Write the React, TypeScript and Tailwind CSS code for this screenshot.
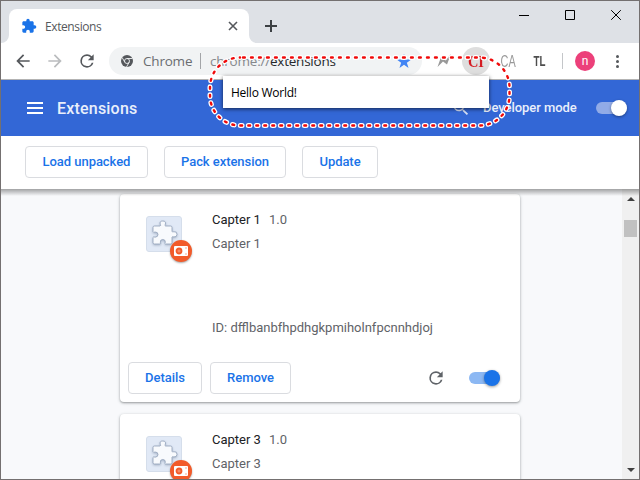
import React from 'react';

const UI = "font-['Open_Sans','Noto_Sans',sans-serif]";

function PuzzleIcon({ className }: { className: string }) {
  return (
    <svg viewBox="0 0 24 24" className={className}>
      <path d="M20.5 11H19V7c0-1.1-.9-2-2-2h-4V3.5a2.5 2.5 0 0 0-5 0V5H4c-1.1 0-1.99.9-1.99 2v3.8H3.5c1.49 0 2.7 1.21 2.7 2.7s-1.21 2.7-2.7 2.7H2V20c0 1.1.9 2 2 2h3.8v-1.5c0-1.49 1.21-2.7 2.7-2.7s2.7 1.21 2.7 2.7V22H17c1.1 0 2-.9 2-2v-4h1.5a2.5 2.5 0 0 0 0-5z" />
    </svg>
  );
}

function ReloadIcon({ className }: { className: string }) {
  return (
    <svg viewBox="0 0 24 24" className={className}>
      <path d="M17.65 6.35A7.96 7.96 0 0 0 12 4a8 8 0 1 0 7.73 10h-2.08A6 6 0 1 1 12 6c1.66 0 3.14.69 4.22 1.78L13 11h7V4z" />
    </svg>
  );
}

function BackIcon({ className }: { className: string }) {
  return (
    <svg viewBox="0 0 24 24" className={className}>
      <path d="M20 11H7.83l5.59-5.59L12 4l-8 8 8 8 1.41-1.41L7.83 13H20z" />
    </svg>
  );
}

function TabStrip() {
  return (
    <div className="flex h-[42px] bg-[#dee1e6] pl-2">
      <div className="relative mt-2 flex h-[34px] w-[240px] items-center rounded-t-lg bg-white pl-3 pr-[11px]">
        <svg viewBox="0 0 8 8" className="absolute -left-2 bottom-0 size-2 fill-white">
          <path d="M8 0v8H0a8 8 0 0 0 8-8" />
        </svg>
        <svg viewBox="0 0 8 8" className="absolute -right-2 bottom-0 size-2 fill-white">
          <path d="M0 0v8h8a8 8 0 0 1-8-8" />
        </svg>
        <PuzzleIcon className="size-4 fill-[#1a73e8]" />
        <span className="ml-2 mt-px grow text-[12px] tracking-[-0.4px] text-[#55585c]">Extensions</span>
        <svg viewBox="0 0 10 10" className="size-[10px] fill-none stroke-[#55585c] stroke-[1.6]">
          <path d="M1 1l8 8M9 1L1 9" />
        </svg>
      </div>
      <svg viewBox="0 0 12 12" className="ml-4 mt-[19px] size-3 fill-none stroke-[#3c4043] stroke-2">
        <path d="M6 0v12M0 6h12" />
      </svg>
      <div className="ml-auto mt-[9px] flex gap-9 pr-[18px]">
        <svg viewBox="0 0 10 10" className="size-[10px] fill-none stroke-black">
          <path d="M0 5.5h10" />
        </svg>
        <svg viewBox="0 0 10 10" className="size-[10px] fill-none stroke-black">
          <path d="M.5 .5h9v9h-9z" />
        </svg>
        <svg viewBox="0 0 10 10" className="size-[10px] fill-none stroke-black">
          <path d="M.2 .2l9.6 9.6M9.8 .2L.2 9.8" />
        </svg>
      </div>
    </div>
  );
}

function Toolbar() {
  return (
    <div className="flex h-[37px] shrink-0 items-center border-b border-[#b3b3b3] bg-white pl-[12px]">
      <BackIcon className="size-5 fill-[#55585c]" />
      <BackIcon className="ml-3 size-5 rotate-180 fill-[#babcbe]" />
      <ReloadIcon className="ml-3 size-5 fill-[#55585c]" />
      <div className="ml-3 flex h-7 w-[313px] items-center rounded-full bg-[#f1f3f4] pl-3 pr-[10px]">
        <svg viewBox="0 0 24 24" className="size-3 fill-none stroke-[#f1f3f4]">
          <circle cx="12" cy="12" r="12" className="fill-[#55585c] stroke-none" />
          <circle cx="12" cy="12" r="5" strokeWidth="1.8" />
          <path d="M12 7h11M7.7 14.5L2.2 5M16.3 14.5L11 24" strokeWidth="1.8" />
        </svg>
        <span className={`ml-[10px] w-[50px] whitespace-nowrap text-[13.5px] tracking-[-0.2px] text-[#6a6d71] ${UI}`}>Chrome</span>
        <span className="ml-[7px] h-4 w-px bg-[#a3a5a8]" />
        <span className={`ml-[9px] grow whitespace-nowrap text-[13.5px] tracking-[-0.22px] text-[#85888c] ${UI}`}>
          chrome://<span className="text-[#26282b]">extensions</span>
        </span>
        <svg viewBox="0 0 24 24" className="size-4 fill-[#4285f4]">
          <path d="M12 17.8L18.8 22.5 16.3 14.5 23 9.6h-8.2L12 1.5 9.2 9.6H1l6.7 4.9-2.5 8z" />
        </svg>
      </div>
      <svg viewBox="0 0 16 16" className="ml-[14px] size-4 fill-[#999]">
        <path d="M1.500 14L5 4l4.500 3.500L15 1l-4 10.500L7 8.500z" />
      </svg>
      <span className="ml-[10px] flex size-7 items-center justify-center rounded-full bg-[#dedede] pt-px font-['Liberation_Serif',serif] text-[16px] font-bold text-[#d41c23]">
        <span className="scale-x-90">CI</span>
      </span>
      <span className="ml-[10px] flex w-4 justify-center pt-[2px] font-['Liberation_Sans',sans-serif] text-[16px] text-[#999]">
        <span className="scale-x-[.68]">CA</span>
      </span>
      <span className="ml-[16px] flex w-4 justify-center pt-px font-['Liberation_Sans',sans-serif] text-[14px] font-bold text-[#4d4d4d]">
        <span className="scale-x-[.7]">TL</span>
      </span>
      <span className="ml-[14px] h-4 w-px bg-[#c4c6c9]" />
      <span className="ml-3 flex size-5 items-center justify-center rounded-full bg-[#ec407a] font-['Roboto',sans-serif] text-[12px] leading-none text-white">
        n
      </span>
      <span className="ml-[21px] flex flex-col gap-[2px]">
        <i className="size-[3px] rounded-full bg-[#55585c]" />
        <i className="size-[3px] rounded-full bg-[#55585c]" />
        <i className="size-[3px] rounded-full bg-[#55585c]" />
      </span>
    </div>
  );
}

function Header() {
  return (
    <header className="flex h-14 shrink-0 items-center bg-[#3367d6] pr-3 pl-[26px] text-white">
      <div className="flex flex-col gap-[3px]">
        <i className="h-[2px] w-4 bg-white" />
        <i className="h-[2px] w-4 bg-white" />
        <i className="h-[2px] w-4 bg-white" />
      </div>
      <h1 className="ml-[14px] mt-px grow text-[16px] font-medium tracking-[0.2px] text-[#e9effb]">Extensions</h1>
      <svg viewBox="0 0 24 24" className="mr-[12px] size-5 fill-[#d8e1f6]">
        <path d="M15.5 14h-.79l-.28-.27A6.47 6.47 0 0 0 16 9.5 6.5 6.5 0 1 0 9.5 16c1.61 0 3.09-.59 4.23-1.57l.27.28v.79l5 4.99L20.49 19zm-6 0a4.5 4.5 0 1 1 0-9 4.500 4.500 0 0 1 0 9z" />
      </svg>
      <span className="w-[95px] whitespace-nowrap text-[13px] font-medium tracking-[-0.05px] text-[#e9effb]">Developer mode</span>
      <span className="ml-[18px] flex h-3 w-[31px] items-center justify-end rounded-full bg-[#91abe7]">
        <i className="size-4 shrink-0 rounded-full bg-white shadow-[0_1px_3px_rgba(0,0,0,.4)]" />
      </span>
    </header>
  );
}

function Button({ children, className }: { children: string; className: string }) {
  return (
    <button className={`h-8 rounded-[4px] border border-[#dadce0] text-[13px] font-medium tracking-[-0.05px] text-[#1a73e8] ${className}`}>
      {children}
    </button>
  );
}

function ExtensionCard({ name, id }: { name: string; id?: string }) {
  return (
    <article className="flex h-[208px] w-[400px] shrink-0 flex-col rounded-[4px] bg-white shadow-[0_1px_2px_rgba(60,64,67,.4),0_1px_3px_1px_rgba(60,64,67,.12)]">
      <div className="flex h-[168px] pl-[26px] pt-[22px]">
        <div className="relative size-9 shrink-0 rounded-[3px] border border-[#d5deeb] bg-[#e1e9f6]">
          <svg viewBox="0 0 26 26" className="absolute left-[5px] top-[3px] size-[26px] fill-[#f8fafd] stroke-[#9aa8be] stroke-[.9] drop-shadow-[0_1px_1px_rgba(70,90,120,.35)]">
            <path d="M1 7.5Q1 6 2.5 6H8Q9.3 5.6 8.2 4.2 7.4 1 10.8 1T13.4 4.2Q12.3 5.600 13.6 6H18.500Q20 6 20 7.500V11.300Q20.500 12.700 21.700 11.700 25 11.200 25 14.300T21.700 16.900Q20.500 16 20 17.300V22.500Q20 24 18.500 24H13.500Q12.200 23.600 13.300 22.200 13.500 19.500 10.800 19.500T8.300 22.200Q9.400 23.600 8 24H2.500Q1 24 1 22.500V17.500Q1.600 16.200 3 17.200 6 17 6 14.500T3 12Q1.600 13 1 11.500Z" />
          </svg>
          <span className="absolute left-[23px] top-[23px] flex size-[22px] items-center justify-center rounded-full bg-[#f25b2a] shadow-[0_1px_2px_rgba(0,0,0,.35)]">
            <svg viewBox="0 0 14 10" className="h-[10px] w-[14px]">
              <rect width="14" height="10" rx="1" fill="#fff" />
              <circle cx="5" cy="5" r="2.500" fill="#f58a66" stroke="#f25b2a" strokeWidth="1.800" />
              <path d="M11.500 1.500h1v1h-1zM11.500 7.500h1v1h-1z" fill="#f25b2a" />
            </svg>
          </span>
        </div>
        <div className="ml-[30px] mt-[-6px] flex flex-col text-[13px] leading-[20px] text-[#5f6368]">
          <div className="flex gap-2">
            <span className="text-[#202124]">{name}</span>
            <span>1.0</span>
          </div>
          <p className="mt-1">{name}</p>
          {id && <p className="mt-16 whitespace-nowrap">ID: {id}</p>}
        </div>
      </div>
      {id && (
        <div className="flex items-center gap-2 pl-2">
          <Button className="w-[74px]">Details</Button>
          <Button className="w-[81px]">Remove</Button>
          <ReloadIcon className="ml-auto size-5 fill-[#5f6368]" />
          <span className="ml-[15px] mr-[20px] flex h-3 w-[31px] items-center justify-end rounded-full bg-[#8cb8f3]">
            <i className="size-4 shrink-0 rounded-full bg-[#1a73e8] shadow-[0_1px_3px_rgba(0,0,0,.4)]" />
          </span>
        </div>
      )}
    </article>
  );
}

function Scrollbar() {
  return (
    <div className="flex w-[17px] shrink-0 flex-col items-center bg-[#f0f0f0]">
      <svg viewBox="0 0 8 4" className="mt-2 h-1 w-2 fill-[#404040]">
        <path d="M0 4L4 0l4 4" />
      </svg>
      <i className="mt-[19px] h-[17px] w-[13px] bg-[#c1c1c1]" />
      <svg viewBox="0 0 8 4" className="mb-[7px] mt-auto h-1 w-2 fill-[#404040]">
        <path d="M0 0l4 4 4-4" />
      </svg>
    </div>
  );
}

export default function App() {
  return (
    <div className="relative flex h-[480px] w-[640px] flex-col overflow-hidden border border-[#747070] bg-[#f8f9fb] font-['Roboto',sans-serif]">
      <div className={`shrink-0 ${UI}`}>
        <TabStrip />
      </div>
      <Toolbar />
      <Header />
      <div className="flex h-[53px] shrink-0 items-center gap-4 bg-white pb-px pl-6">
        <Button className="w-[123px]">Load unpacked</Button>
        <Button className="w-[122px]">Pack extension</Button>
        <Button className="w-[76px]">Update</Button>
      </div>
      <main className="relative flex min-h-0 grow">
        <div className="flex grow flex-col gap-3 overflow-hidden pl-[119px] pt-[5px]">
          <ExtensionCard name="Capter 1" id="dfflbanbfhpdhgkpmiholnfpcnnhdjoj" />
          <ExtensionCard name="Capter 3" />
        </div>
        <Scrollbar />
        <div className="absolute inset-x-0 top-0 h-[7px] bg-gradient-to-b from-black/35 to-transparent" />
      </main>

      <div className={`absolute left-[222px] top-[75px] flex h-8 w-[266px] items-center bg-white pl-2 pt-px text-[12px] tracking-[-0.25px] text-black shadow-[0_1px_4px_rgba(0,0,0,.65)] ${UI}`}>
        Hello World!
      </div>
      <svg viewBox="0 0 640 480" className="pointer-events-none absolute -left-px -top-px h-[480px] w-[640px] fill-none">
        <rect x="210" y="57.500" width="299.500" height="68" rx="30" stroke="#fff" strokeWidth="5" strokeLinecap="round" strokeDasharray="1.800 6.200" strokeDashoffset="-3" />
        <rect x="210" y="57.500" width="299.500" height="68" rx="30" stroke="#f00a0a" strokeWidth="2.400" strokeLinecap="round" strokeDasharray="1.800 6.200" strokeDashoffset="-3" />
      </svg>
    </div>
  );
}
